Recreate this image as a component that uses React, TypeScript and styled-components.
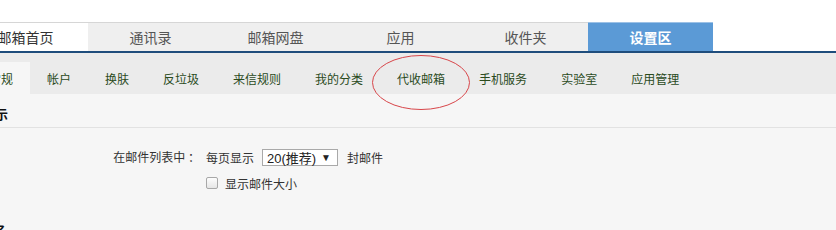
import styled, { createGlobalStyle } from 'styled-components';

const mainTabs = [
	{ name: '邮箱首页', kind: 'home' },
	{ name: '通讯录', kind: 'plain' },
	{ name: '邮箱网盘', kind: 'plain' },
	{ name: '应用', kind: 'plain' },
	{ name: '收件夹', kind: 'plain' },
	{ name: '设置区', kind: 'current' },
];

const subTabs = ['常规', '帐户', '换肤', '反垃圾', '来信规则', '我的分类', '代收邮箱', '手机服务', '实验室', '应用管理'];

const GlobalStyle = createGlobalStyle`
	html, body {
		margin: 0;
		padding: 0;
		background: #f6f6f6;
	}
	body {
		font-family: 'Noto Sans CJK SC', 'Noto Sans', sans-serif;
		overflow: hidden;
	}
`;

const Page = styled.div`
	position: relative;
	width: 836px;
	height: 230px;
	overflow: hidden;
	background: #f6f6f6;
`;

const TopSpace = styled.div`
	height: 22px;
	background: #fff;
`;

const MainNav = styled.div`
	display: flex;
	background: #fff;
	border-bottom: 2px solid #1f4d7c;
	margin-left: -37px;
`;

const MainTab = styled.div<{ $kind: string }>`
	width: 125px;
	height: 28px;
	border-top: 1px solid ${({ $kind }) => ($kind === 'current' ? '#9cc1e6' : '#d6d6d6')};
	display: flex;
	align-items: center;
	justify-content: center;
	font-size: 14px;
	font-weight: ${({ $kind }) => ($kind === 'current' ? 'bold' : 'normal')};
	color: ${({ $kind }) => ($kind === 'current' ? '#fff' : $kind === 'home' ? '#333' : '#555')};
	background: ${({ $kind }) => ($kind === 'current' ? '#5b9ad6' : $kind === 'home' ? '#fff' : '#efefef')};
`;

const SubNav = styled.div`
	display: flex;
	align-items: flex-end;
	height: 41px;
	background: #ebebeb;
	margin-left: -28px;
`;

const SubTab = styled.div<{ $active?: boolean }>`
	height: 32px;
	padding: 0 17px;
	display: flex;
	align-items: center;
	font-size: 12px;
	color: #2a4a1c;
	background: ${({ $active }) => ($active ? '#f6f6f6' : 'transparent')};
`;

const Content = styled.div`
	background: #f6f6f6;
`;

const SectionTitle = styled.div<{ $offset: number }>`
	height: 27px;
	padding-top: 6px;
	display: flex;
	align-items: center;
	margin-left: ${({ $offset }) => $offset}px;
	font-size: 13px;
	font-weight: bold;
	color: #111;
	border-bottom: 1px solid #e2e2e2;
`;

const OptionGrid = styled.div`
	display: grid;
	grid-template-columns: 206px auto;
	row-gap: 8px;
	padding: 20px 0 18px;
	font-size: 12px;
	color: #333;
`;

const Label = styled.div`
	text-align: right;
	padding-right: 6px;
	line-height: 18px;
`;

const Line = styled.div<{ $indent?: boolean }>`
	display: flex;
	align-items: center;
	gap: 8px;
	height: 18px;
	grid-column: ${({ $indent }) => ($indent ? 2 : 'auto')};
`;

const FakeSelect = styled.div`
	width: 64px;
	height: 15px;
	border: 1px solid #a9a9a9;
	background: #fff;
	display: flex;
	align-items: center;
	justify-content: space-between;
	padding: 0 6px 0 4px;
	box-sizing: content-box;
	margin-right: 1px;
	font-family: 'Liberation Sans', 'Noto Sans CJK SC', sans-serif;
	font-size: 13px;
	color: #222;
`;

const Arrow = styled.span`
	font-size: 10px;
	color: #222;
`;

const CheckBox = styled.span`
	width: 10px;
	height: 10px;
	border: 1px solid #a8a8a8;
	border-radius: 2px;
	margin-right: -1px;
	background: linear-gradient(#fdfdfd, #e6e6e6);
`;

const Ellipse = styled.svg`
	position: absolute;
	left: 371px;
	top: 54px;
`;

const App = () => {
	return (
		<Page>
			<GlobalStyle />
			<TopSpace />
			<MainNav>
				{mainTabs.map((tab) => (
					<MainTab key={tab.name} $kind={tab.kind}>
						{tab.name}
					</MainTab>
				))}
			</MainNav>
			<SubNav>
				{subTabs.map((name, i) => (
					<SubTab key={name} $active={i === 0}>
						{name}
					</SubTab>
				))}
			</SubNav>
			<Content>
				<SectionTitle $offset={-18}>显示</SectionTitle>
				<OptionGrid>
					<Label>在邮件列表中 ：</Label>
					<Line>
						每页显示
						<FakeSelect>
							20(推荐)
							<Arrow>▼</Arrow>
						</FakeSelect>
						封邮件
					</Line>
					<Line $indent>
						<CheckBox />
						显示邮件大小
					</Line>
				</OptionGrid>
				<SectionTitle $offset={-20}>签名</SectionTitle>
			</Content>
			<Ellipse width="100" height="58" viewBox="0 0 100 58">
				<ellipse cx="50" cy="28.5" rx="48.5" ry="27" fill="none" stroke="#d8464a" strokeWidth="1" />
			</Ellipse>
		</Page>
	);
};

export default App;
